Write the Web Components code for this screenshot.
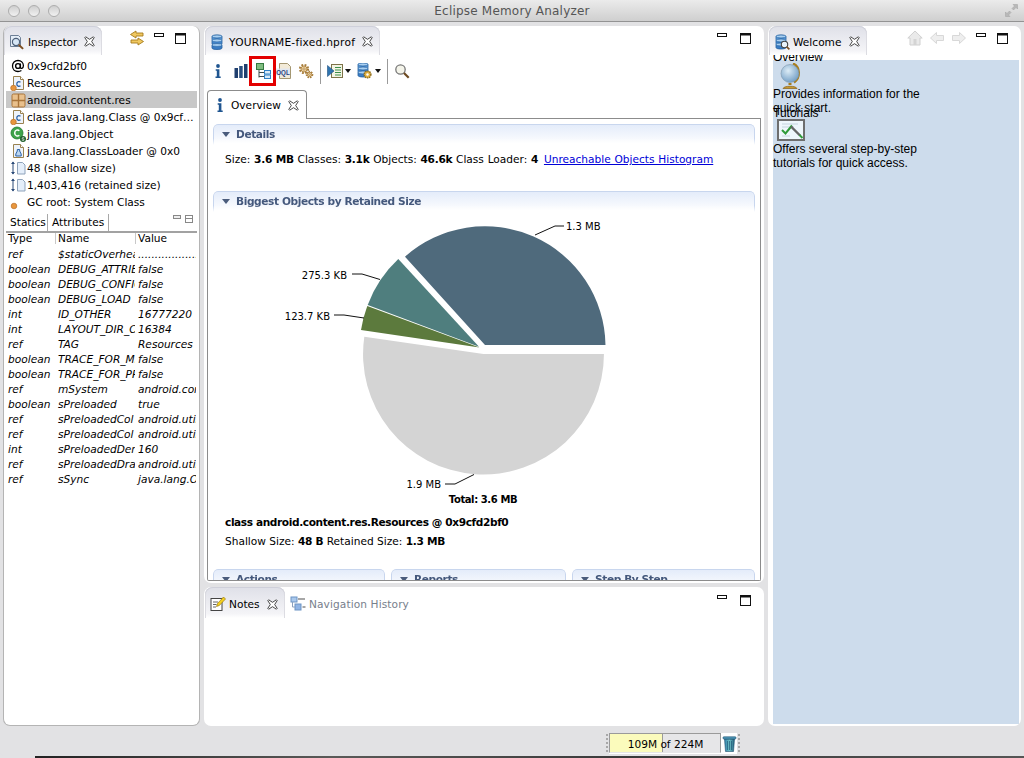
<!DOCTYPE html>
<html>
<head>
<meta charset="utf-8">
<title>Eclipse Memory Analyzer</title>
<style>
  html, body { margin: 0; height: 758px; overflow: hidden; background: #e2e2e4; }
</style>
</head>
<body>
<mat-window>
  <mat-pane slot="left" class="inspector">
    <pane-tab slot="tabs" icon="inspector" label="Inspector" style="width:98px"></pane-tab>
    <span slot="actions" style="display:flex;gap:9px;align-items:flex-start">
      <mat-icon name="swap" style="margin:-3px 0 0 0"></mat-icon>
      <mat-icon name="min"></mat-icon>
      <mat-icon name="max" style="margin-left:1px"></mat-icon>
    </span>
    <inspector-view></inspector-view>
  </mat-pane>

  <mat-pane slot="center" style="flex:none;height:557px">
    <pane-tab slot="tabs" icon="db" label="YOURNAME-fixed.hprof" style="width:175px;--ls:.25px"></pane-tab>
    <span slot="actions" style="display:flex;gap:12px"><mat-icon name="min"></mat-icon><mat-icon name="max"></mat-icon></span>
    <editor-toolbar></editor-toolbar>
    <overview-page></overview-page>
  </mat-pane>

  <mat-pane slot="center" style="flex:1">
    <pane-tab slot="tabs" icon="notes" label="Notes" style="width:80px;height:31px;padding-top:3px"></pane-tab>
    <pane-tab slot="tabs" icon="history" label="Navigation History" plain style="height:31px;padding-top:3px"></pane-tab>
    <span slot="actions" style="display:flex;gap:12px;margin-top:1px"><mat-icon name="min"></mat-icon><mat-icon name="max"></mat-icon></span>
  </mat-pane>

  <mat-pane slot="right">
    <pane-tab slot="tabs" icon="welcome" label="Welcome" style="width:98px"></pane-tab>
    <span slot="actions" style="display:flex;gap:6px">
      <mat-icon name="home" style="margin-top:-3px"></mat-icon>
      <mat-icon name="back" style="margin-top:-3px"></mat-icon>
      <mat-icon name="forward" style="margin-top:-3px"></mat-icon>
      <mat-icon name="min" style="margin-left:3px"></mat-icon>
      <mat-icon name="max" style="margin-left:4px"></mat-icon>
    </span>
    <welcome-view></welcome-view>
  </mat-pane>
</mat-window>

<script>
const UI_FONT = '"DejaVu Sans", "Liberation Sans", sans-serif';

const DOC = '<path d="M3.5 1.5h7l3 3v10h-10z" fill="#eef3fa" stroke="#9a8250"/><path d="M10.5 1.5v3h3" fill="#fff" stroke="#9a8250"/>';
const DOT = '<circle cx="3.5" cy="13" r="2.8" fill="#e8963c" stroke="#b9702a" stroke-width=".7"/>';
const CYL = (y, f) => `<path d="M2 ${y+1.5}c0-2 10-2 10 0v3c0 2-10 2-10 0z" fill="${f}" stroke="#24609e" stroke-width=".8"/><ellipse cx="7" cy="${y+1.5}" rx="5" ry="1.4" fill="#a9d0f2" stroke="#24609e" stroke-width=".6"/>`;

const ICONS = {
  min: [11, 5, '<rect x=".5" y=".5" width="9" height="3" fill="#fff" stroke="#111"/>'],
  max: [11, 11, '<rect x=".5" y=".5" width="10" height="10" fill="#fff" stroke="#111"/><rect x="0" y="0" width="11" height="2.5" fill="#111"/>'],
  minsm: [8, 5, '<rect x=".5" y=".5" width="7" height="3" fill="#eee" stroke="#888"/>'],
  maxsm: [8, 8, '<rect x=".5" y=".5" width="7" height="7" fill="#fff" stroke="#888"/><rect x="0" y="3" width="8" height="1" fill="#888"/>'],
  close: [11, 11, '<path d="M1.6.8 5.5 3.3 9.4.8l.8.8-2.5 3.9 2.5 3.9-.8.8-3.9-2.5-3.9 2.5-.8-.8 2.5-3.9L.8 1.6z" fill="#fff" stroke="#333" stroke-width=".9"/>'],
  inspector: [16, 16, '<path d="M1.5 1.5h8l2 2v9h-10z" fill="#e4edf7" stroke="#6d7f96"/><circle cx="7" cy="8" r="3.6" fill="#d6e6f5" stroke="#4d5f78" stroke-width="1.2"/><path d="M9.7 10.7l4.4 4.2" stroke="#7d4f22" stroke-width="2"/>'],
  swap: [16, 16, '<path d="M7 1 1.5 4.5 7 8V6h7V3H7z" fill="#f0c860" stroke="#a67a1c" stroke-width=".9"/><path d="M9 8l5.5 3.5L9 15v-2H2v-3h7z" fill="#f0c860" stroke="#a67a1c" stroke-width=".9"/>'],
  at: [16, 16, '<circle cx="8" cy="8" r="2.4" fill="none" stroke="#000" stroke-width="1.4"/><path d="M10.4 5.4v3.800c0 1.900 3 1.700 3-1.400C13.400 4.600 11 2.500 8 2.500 4.800 2.500 2.500 4.800 2.500 8s2.300 5.500 5.500 5.500c1.400 0 2.500-.4 3.400-1" fill="none" stroke="#000" stroke-width="1.300"/>'],
  classdoc: [16, 16, DOC + '<path d="M10.500 7.200C9 6 6.800 6.700 6.800 9s2.200 3 3.700 1.800" fill="none" stroke="#2a62a8" stroke-width="1.300"/>' + DOT],
  pkg: [16, 16, '<rect x="2" y="2" width="13" height="13" rx="1.500" fill="#e9c08c" stroke="#a9743a"/><path d="M8.500 2v13M2 8.500h13" stroke="#a9743a" stroke-width="1.400"/>'],
  cobj: [16, 16, '<circle cx="7" cy="7" r="6" fill="#3ea24a" stroke="#1f7a2c" stroke-width=".8"/><path d="M9.300 4.800C8 3.300 4.700 3.800 4.700 7s3.300 3.700 4.600 2.200" fill="none" stroke="#fff" stroke-width="1.500"/><circle cx="13" cy="13" r="3" fill="#1f5f2c"/><path d="M14.200 11.900c-1-.6-2.400-.2-2.200.6.200.7 2.400.4 2.200 1.300-.2.800-1.600.8-2.400.3" fill="none" stroke="#fff" stroke-width=".7"/>'],
  loader: [16, 16, DOC + '<path d="M7.300 6.500h2.400v1.500l1.500 3v2H5.800v-2l1.500-3z" fill="#bcd6f0" stroke="#2a62a8"/>'],
  size: [16, 16, '<path d="M3 2v12" stroke="#2a4a78"/><path d="M1 4 3 1.500 5 4zM1 12l2 2.500L5 12z" fill="#2a4a78"/><path d="M7.500 2.500h5l2.500 2.500v9H7.500z" fill="#e4eefa" stroke="#8fa3bb"/>'],
  gcdot: [16, 16, '<circle cx="4" cy="12" r="2.800" fill="#e8963c" stroke="#b9702a" stroke-width=".7"/>'],
  db: [16, 16, CYL(1, '#5c9bdc') + CYL(5, '#4488cf') + CYL(9.500, '#3a7cc4')],
  info: [16, 16, '<circle cx="8" cy="3" r="1.900" fill="#1f5590"/><path d="M5.700 6.200h3.700v7.200h1.300V15H5.500v-1.600h1.300V7.800H5.700z" fill="#1f5590"/>'],
  bars: [16, 16, '<rect x="1.500" y="5" width="3.500" height="10" fill="#1f3f6e"/><rect x="6.200" y="3" width="3.500" height="12" fill="#2b4f80"/><rect x="11" y="1" width="3.500" height="14" fill="#1f3f6e"/>'],
  domtree: [16, 16, '<path d="M4 7v7.500M4 9.500h5M4 13.500h5" stroke="#3d4a4a" fill="none"/><rect x="1.500" y=".5" width="7" height="6" fill="#7fbc7f" stroke="#347a3f"/><rect x="9.500" y="7.500" width="6" height="3.500" fill="#d8eaf8" stroke="#2f80c4"/><rect x="9.500" y="12" width="6" height="3.500" fill="#d8eaf8" stroke="#2f80c4"/>'],
  oql: [16, 16, '<path d="M3.500 .5h8l3 3v12h-11z" fill="#f2ead8" stroke="#a59772"/><rect x="0" y="5.500" width="14" height="7" fill="#dde6f5" opacity=".8"/><text x=".2" y="11.500" font-family="Liberation Sans" font-weight="700" font-size="7" fill="#2a3f78" textLength="13.500" lengthAdjust="spacingAndGlyphs">OQL</text>'],
  gear: [16, 16, '<g fill="#d8a860" stroke="#a87e3c" stroke-width=".8"><circle cx="6" cy="6" r="3.800" stroke-dasharray="1.700 1.300" stroke-width="2.600" fill="none"/><circle cx="6" cy="6" r="3" fill="#ecd09c"/><circle cx="6" cy="6" r="1.100" fill="#fff"/><circle cx="11.500" cy="11.500" r="2.800" stroke-dasharray="1.400 1" stroke-width="2" fill="none"/><circle cx="11.500" cy="11.500" r="2.300" fill="#ecd09c"/><circle cx="11.500" cy="11.500" r=".8" fill="#fff"/></g>'],
  run: [16, 16, '<rect x="4.500" y="1.500" width="11" height="13" fill="#f4f4e4" stroke="#7d7348"/><path d="M8 4.500h6M8 7h6M8 9.500h6M8 12h6" stroke="#3d8f4a" stroke-width="1.200"/><path d="M.5 2.500 7 8 .5 13.500z" fill="#2f74b0" stroke="#1e4f80" stroke-width=".6"/>'],
  dbgear: [16, 16, CYL(0, '#5c9bdc') + CYL(4, '#4488cf') + CYL(8, '#3a7cc4') + '<circle cx="11.500" cy="11.500" r="3.400" fill="#e0b040" stroke="#8a6a1c" stroke-dasharray="1.400 .8" stroke-width="1.400"/><circle cx="11.500" cy="11.500" r="1.200" fill="#fff"/>'],
  search: [16, 16, '<circle cx="6.500" cy="6.500" r="4.700" fill="#f4f4ea" stroke="#777" stroke-width="1.300"/><path d="M10 10l4.700 4.700" stroke="#6d4a20" stroke-width="2.200"/>'],
  notes: [16, 16, '<rect x="1" y="2.500" width="11" height="12" fill="#fff" stroke="#444"/><path d="M3 6h5M3 8.500h3.500M3 11h3" stroke="#666"/><path d="M6.500 10.500l1-3L13.500 1l2 2-6.200 6.500z" fill="#f4d020" stroke="#9a7a10" stroke-width=".7"/>'],
  history: [16, 16, '<rect x="1" y="1" width="6" height="5" fill="#a9c8ec" stroke="#6d94c4"/><rect x="5" y="8" width="6" height="6" fill="#90b4e4" stroke="#6d94c4"/><path d="M2.500 6v5H5" fill="none" stroke="#8aa0bd"/><path d="M8 3h7M12.500 11h3" stroke="#8a8a8a" stroke-width="1.300"/>'],
  welcome: [16, 16, CYL(1, '#5c9bdc') + CYL(5, '#4488cf') + CYL(9, '#3a7cc4') + '<circle cx="10.500" cy="10.500" r="3.200" fill="#e8f2fa" stroke="#444" stroke-width="1.100"/><path d="M12.800 12.800l2.600 2.600" stroke="#7d4f22" stroke-width="1.700"/>'],
  home: [16, 16, '<path d="M8 1 .8 8H3v7h10V8h2.200z" fill="#eaeaea" stroke="#d0d0d0"/><rect x="6.500" y="9" width="3" height="6" fill="#d4d4d4"/>'],
  back: [16, 16, '<path d="M7.500 2.500 1.500 8l6 5.500V10.500h7v-5h-7z" fill="#eeeeee" stroke="#d8d8d8"/>'],
  forward: [16, 16, '<path d="M8.500 2.500l6 5.500-6 5.500V10.500h-7v-5h7z" fill="#eeeeee" stroke="#d8d8d8"/>'],
  globe: [22, 26, '<defs><radialGradient id="g" cx=".4" cy=".35" r=".7"><stop offset="0" stop-color="#dcecf6"/><stop offset="1" stop-color="#6f9cc4"/></radialGradient></defs><path d="M13 .5c7 3 8 14 1 19" fill="none" stroke="#a87e1e" stroke-width="2.400"/><circle cx="10" cy="10.500" r="9" fill="url(#g)" stroke="#7a94a8" stroke-width=".6"/><path d="M10 20v2" stroke="#a87e1e" stroke-width="3"/><path d="M3 25.500c1-3 13-3 14 0z" fill="#c89a30" stroke="#86601a" stroke-width=".7"/>'],
  tutorial: [28, 22, '<rect x="1" y="1" width="26" height="20" fill="#eef6fb" stroke="#6e6e6e" stroke-width="2"/><path d="M5 5h16M5 8h12M5 17h8" stroke="#c4d4de"/><path d="M5 11l3.500 3.500L15 6.500" fill="none" stroke="#2f9a38" stroke-width="2"/><path d="M14 7.500l9 9" stroke="#666" stroke-width="2.400"/><path d="M22.500 16l3 3" stroke="#2f9a38" stroke-width="2"/>'],
  trash: [15, 17, '<defs><linearGradient id="t" x1="0" x2="1"><stop offset="0" stop-color="#2f7fa8"/><stop offset=".5" stop-color="#6fc0c4"/><stop offset="1" stop-color="#1f5f7c"/></linearGradient></defs><path d="M2.500 4h10l-1 12.500h-8z" fill="url(#t)" stroke="#1f5070" stroke-width=".6"/><rect x="1" y="1.800" width="13" height="2.200" rx=".8" fill="#4e98b8" stroke="#1f5070" stroke-width=".6"/><path d="M5.500 6v9M7.500 6v9M9.500 6v9" stroke="#1f5a78" stroke-width=".7"/>'],
  zoom: [13, 13, '<path d="M8 .5h4.500V5L11 3.500 8.500 6 7 4.500 9.500 2zM5 12.500H.5V8L2 9.500 4.500 7 6 8.500 3.500 11z" fill="#b8b8b8" stroke="#a0a0a0" stroke-width=".5"/>']
};

class MatIcon extends HTMLElement {
  connectedCallback() {
    const [w, h, body] = ICONS[this.getAttribute('name')];
    this.attachShadow({ mode: 'open' }).innerHTML = `
      <style>
        :host { display: inline-flex; flex: none; width: ${w}px; height: ${h}px; }
        svg { display: block; }
      </style>
      <svg width="${w}" height="${h}" viewBox="0 0 ${w} ${h}">${body}</svg>`;
  }
}

class MatWindow extends HTMLElement {
  constructor() {
    super();
    this.attachShadow({ mode: 'open' }).innerHTML = `
      <style>
        :host { display: block; font-family: ${UI_FONT}; font-size: 10.6px; color: #000; }
        .win { display: flex; flex-direction: column; height: 756px; background: #e2e2e4; border-radius: 0 0 5px 5px; }
        .title {
          flex: none; height: 21px; display: flex; align-items: center;
          background: linear-gradient(#ebebeb, #cfcfcf); border-bottom: 1px solid #939393;
        }
        .lights { display: flex; gap: 8px; padding-left: 8px; }
        .lights i {
          width: 10px; height: 10px; border-radius: 50%; border: 1px solid #adadad;
          background: linear-gradient(#cfcfcf, #f2f2f2);
        }
        .name { flex: 1; text-align: center; color: #555; font-size: 12px; letter-spacing: .2px; margin-right: 41px; }
        .zoom { margin-right: 6px; }
        .work {
          flex: 1; min-height: 0; display: grid; grid-template-columns: 197px 560px 253px; gap: 4px;
          padding: 4px 3px 0 3px;
        }
        .col { display: flex; flex-direction: column; gap: 4px; min-height: 0; }
        .status {
          flex: none; height: 30px; display: flex; align-items: flex-start;
          padding: 7px 0 0 606px; box-sizing: border-box;
        }
        .dots { width: 2px; height: 18px; margin-top: 1px; background: repeating-linear-gradient(#a8a8a8 0 2px, transparent 2px 4px); }
        .heap { display: flex; width: 128px; height: 21px; background: #fff; margin: 0 1px; }
        .meter {
          width: 112px; box-sizing: border-box; height: 20px; text-align: center; line-height: 20px;
          background: linear-gradient(90deg, #fbfbbc 0 52px, #9a9a9a 52px 53px, #e6e6e8 53px);
          border: 1px solid #9a9a9a; border-bottom-color: #e6e6e8; padding-left: 1px;
        }
        .heap mat-icon { margin: 2px 0 0 1px; }
        .strip { height: 2px; margin-left: 35px; background: linear-gradient(90deg, #222, #5a5a58 30%, #3a3a3a 60%, #555); }
      </style>
      <div class="win">
        <div class="title">
          <div class="lights"><i></i><i></i><i></i></div>
          <div class="name">Eclipse Memory Analyzer</div>
          <mat-icon class="zoom" name="zoom"></mat-icon>
        </div>
        <div class="work">
          <div class="col"><slot name="left"></slot></div>
          <div class="col"><slot name="center"></slot></div>
          <div class="col"><slot name="right"></slot></div>
        </div>
        <div class="status">
          <div class="dots"></div>
          <div class="heap"><div class="meter">109M of 224M</div><mat-icon name="trash"></mat-icon></div>
          <div class="dots"></div>
        </div>
      </div>
      <div class="strip"></div>`;
  }
}

class MatPane extends HTMLElement {
  constructor() {
    super();
    this.attachShadow({ mode: 'open' }).innerHTML = `
      <style>
        :host {
          display: flex; flex-direction: column; flex: 1; min-height: 0; box-sizing: border-box; overflow: hidden;
          background: #fff; border-radius: 7px;
        }
        :host(.inspector) { border: 1px solid #b4b4b4; border-top: 0; }
        .head { flex: none; height: 29px; display: flex; align-items: flex-start; padding-left: 1px; }
        :host(.inspector) .head { padding-left: 0; }
        .actions { margin-left: auto; padding: 7px 13px 0 0; display: flex; }
        .body { flex: 1; min-height: 0; display: flex; flex-direction: column; }
      </style>
      <div class="head"><slot name="tabs"></slot><div class="actions"><slot name="actions"></slot></div></div>
      <div class="body"><slot></slot></div>`;
  }
}

class PaneTab extends HTMLElement {
  connectedCallback() {
    const plain = this.hasAttribute('plain');
    this.attachShadow({ mode: 'open' }).innerHTML = `
      <style>
        :host {
          display: flex; align-items: center; box-sizing: border-box; height: 29px; padding: 2px 7px 0 5px; flex: none;
          border-radius: 8px 8px 0 0;
          ${plain ? 'color: #77808c;' : 'background: linear-gradient(#dfe0e8, #f4f4f7 85%, #fff); box-shadow: inset 0 1px 0 #cfd0da, inset 1px 0 0 #dcdce2, inset -1px 0 0 #dcdce2;'}
        }
        span { margin-left: 3px; white-space: nowrap; flex: 1; letter-spacing: var(--ls, 0); ${plain ? 'letter-spacing: .1px;' : ''} }
      </style>
      <mat-icon name="${this.getAttribute('icon')}"></mat-icon>
      <span>${this.getAttribute('label')}</span>
      ${plain ? '' : '<mat-icon name="close"></mat-icon>'}`;
  }
}

class TreeRow extends HTMLElement {
  connectedCallback() {
    this.attachShadow({ mode: 'open' }).innerHTML = `
      <style>
        :host { display: flex; align-items: center; height: 17px; padding-left: 4px; margin: 0 2px; white-space: nowrap; overflow: hidden; }
        :host([selected]) { background: #c8c8c8; }
        span { margin-left: 1px; }
      </style>
      <mat-icon name="${this.getAttribute('icon')}"></mat-icon><span><slot></slot></span>`;
  }
}

const STATICS = [
  ['ref', '$staticOverhead', '.........................'],
  ['boolean', 'DEBUG_ATTRIB', 'false'],
  ['boolean', 'DEBUG_CONFIG', 'false'],
  ['boolean', 'DEBUG_LOAD', 'false'],
  ['int', 'ID_OTHER', '16777220'],
  ['int', 'LAYOUT_DIR_O', '16384'],
  ['ref', 'TAG', 'Resources'],
  ['boolean', 'TRACE_FOR_MI', 'false'],
  ['boolean', 'TRACE_FOR_PR', 'false'],
  ['ref', 'mSystem', 'android.content'],
  ['boolean', 'sPreloaded', 'true'],
  ['ref', 'sPreloadedCol', 'android.util'],
  ['ref', 'sPreloadedCol', 'android.util'],
  ['int', 'sPreloadedDen', '160'],
  ['ref', 'sPreloadedDra', 'android.util'],
  ['ref', 'sSync', 'java.lang.Object']
];

class InspectorView extends HTMLElement {
  constructor() {
    super();
    const rows = STATICS.map(r => `<div class="row">${r.map(c => `<div>${c}</div>`).join('')}</div>`).join('');
    this.attachShadow({ mode: 'open' }).innerHTML = `
      <style>
        :host { display: flex; flex-direction: column; flex: 1; min-height: 0; padding-top: 2px; }
        .tabs { display: flex; height: 17px; margin: 4px 2px 0; border-bottom: 2px solid #a2a2a2; }
        .tabs div { padding: 0 4px; line-height: 17px; border-right: 1px solid #a8a8a8; }
        .tabs div:first-child { width: 33px; }
        .tabs div:nth-child(2) { width: 52px; }
        .mini { margin-left: auto; display: flex; gap: 4px; padding: 0 4px 0 0; align-items: flex-start; margin-top: 1px; }
        .row, .hdr { display: grid; grid-template-columns: 50px 80px 60px; margin: 0 2px; white-space: nowrap; }
        .hdr { height: 14px; }
        .hdr div { padding-left: 2px; border-right: 1px solid #c8c8c8; height: 11px; line-height: 11px; }
        .hdr div:last-child { border: 0; }
        .row { height: 15px; line-height: 15px; font-style: italic; }
        .row div { overflow: hidden; padding-left: 2px; }
        .row div:nth-child(2) { margin-right: 1px; }
      </style>
      <tree-row icon="at">0x9cfd2bf0</tree-row>
      <tree-row icon="classdoc">Resources</tree-row>
      <tree-row icon="pkg" selected>android.content.res</tree-row>
      <tree-row icon="classdoc">class java.lang.Class @ 0x9cf…</tree-row>
      <tree-row icon="cobj">java.lang.Object</tree-row>
      <tree-row icon="loader">java.lang.ClassLoader @ 0x0</tree-row>
      <tree-row icon="size">48 (shallow size)</tree-row>
      <tree-row icon="size">1,403,416 (retained size)</tree-row>
      <tree-row icon="gcdot">GC root: System Class</tree-row>
      <div class="tabs">
        <div>Statics</div><div>Attributes</div>
        <span class="mini"><mat-icon name="minsm"></mat-icon><mat-icon name="maxsm"></mat-icon></span>
      </div>
      <div class="hdr"><div>Type</div><div>Name</div><div>Value</div></div>
      ${rows}`;
  }
}

class EditorToolbar extends HTMLElement {
  constructor() {
    super();
    this.attachShadow({ mode: 'open' }).innerHTML = `
      <style>
        :host { display: flex; flex: none; align-items: center; height: 32px; padding: 0 0 2px 6px; }
        .sep { width: 1px; height: 25px; background: #9a9a9a; margin-left: 6px; }
        .red { box-sizing: border-box; width: 27px; height: 30px; border: 3px solid #e30000; display: flex; align-items: center; justify-content: center; }
        .arrow { width: 0; height: 0; border: 3px solid transparent; border-top: 4px solid #111; border-bottom: 0; }
      </style>
      <mat-icon name="info"></mat-icon>
      <mat-icon name="bars" style="margin-left:7px"></mat-icon>
      <div class="red"><mat-icon name="domtree"></mat-icon></div>
      <mat-icon name="oql"></mat-icon>
      <mat-icon name="gear" style="margin-left:6px"></mat-icon>
      <div class="sep"></div>
      <mat-icon name="run" style="margin-left:6px"></mat-icon>
      <i class="arrow" style="margin-left:2px"></i>
      <mat-icon name="dbgear" style="margin-left:5px"></mat-icon>
      <i class="arrow" style="margin-left:3px"></i>
      <div class="sep"></div>
      <mat-icon name="search" style="margin-left:6px"></mat-icon>`;
  }
}

class FormSection extends HTMLElement {
  connectedCallback() {
    this.attachShadow({ mode: 'open' }).innerHTML = `
      <style>
        :host { display: block; min-width: 0; }
        .head {
          height: 21px; box-sizing: border-box; padding: 0 0 2px 8px; display: flex; align-items: center; gap: 6px;
          border: 1px solid #c8d6ee; border-bottom: 0; border-radius: 5px 5px 0 0;
          background: linear-gradient(#e4ecfa, #fff); color: #44587c; font-weight: 700; letter-spacing: -.4px; white-space: nowrap;
          -webkit-mask-image: linear-gradient(#000 70%, transparent);
        }
        i { width: 0; height: 0; border: 4px solid transparent; border-top: 5px solid #4a5c7c; border-bottom: 0; flex: none; }
      </style>
      <div class="head"><i></i>${this.getAttribute('title')}</div>
      <slot></slot>`;
  }
}

class PieChart extends HTMLElement {
  constructor() {
    super();
    const label = (x, y, t, a = 'start', w = 400) => `<text x="${x}" y="${y}" text-anchor="${a}" font-weight="${w}">${t}</text>`;
    this.attachShadow({ mode: 'open' }).innerHTML = `
      <style>
        :host { display: block; height: 298px; }
        svg { display: block; font-family: ${UI_FONT}; font-size: 10px; fill: #000; }
        .lead { fill: none; stroke: #111; stroke-width: 1; }
        text[font-weight="700"] { letter-spacing: -.4px; }
      </style>
      <svg width="542" height="298" viewBox="213 212 542 298">
        <path d="M485 345H605.500A120.500 120.500 0 0 0 405 256.700Z" fill="#4f6a7c"/>
        <path d="M479 346.700 398.300 259A119 119 0 0 0 367.700 305Z" fill="#4f7e7e"/>
        <path d="M479.500 347.500 367.300 306A119 119 0 0 0 361 330Z" fill="#5c7a3d"/>
        <path d="M483.500 354H603.950A120.450 120.450 0 1 1 364.300 336.700Z" fill="#d4d4d4"/>
        <path class="lead" d="M535 235 555 226H564"/>
        <path class="lead" d="M352 274H362L380 279.500"/>
        <path class="lead" d="M334 315H344L364 318"/>
        <path class="lead" d="M445 484H455L474 474.500"/>
        ${label(566, 230, '1.3 MB')}
        ${label(347, 279, '275.3 KB', 'end')}
        ${label(330, 320, '123.7 KB', 'end')}
        ${label(441, 488, '1.9 MB', 'end')}
        ${label(483, 503, 'Total: 3.6 MB', 'middle', 700)}
      </svg>`;
  }
}

class OverviewPage extends HTMLElement {
  constructor() {
    super();
    this.attachShadow({ mode: 'open' }).innerHTML = `
      <style>
        :host { display: flex; flex-direction: column; height: 491px; margin: 1px 3px 0; flex: none; }
        .tabrow { flex: none; height: 29px; display: flex; }
        .tab {
          width: 100px; box-sizing: border-box; display: flex; align-items: center; padding: 0 7px 0 4px; gap: 3px;
          border: 1px solid #8c8c8c; border-bottom: 0; border-radius: 4px 4px 0 0;
        }
        .tab span { flex: 1; }
        .rest { flex: 1; border-bottom: 1px solid #8c8c8c; }
        .page {
          flex: 1; min-height: 0; overflow: hidden; padding: 5px 5px 0; background: #fff;
          border: 1px solid #8c8c8c; border-top: 0; border-radius: 0 0 2px 2px;
        }
        .details { height: 67px; }
        .line { padding-left: 12px; line-height: 14px; white-space: nowrap; }
        .details .line { padding-top: 7px; word-spacing: .4px; }
        b { letter-spacing: -.3px; }
        a { color: #0000d8; text-decoration: underline; margin-left: 2px; }
        h4 { font-size: inherit; letter-spacing: -.4px; margin: 5px 0 0 12px; line-height: 14px; }
        .sub { margin-top: 5px; }
        .cards { display: grid; grid-template-columns: 172px 175px 183px; gap: 6px; margin-top: 21px; }
      </style>
      <div class="tabrow">
        <div class="tab"><mat-icon name="info"></mat-icon><span>Overview</span><mat-icon name="close"></mat-icon></div>
        <div class="rest"></div>
      </div>
      <div class="page">
        <form-section class="details" title="Details">
          <div class="line">Size: <b>3.6 MB</b> Classes: <b>3.1k</b> Objects: <b>46.6k</b> Class Loader: <b>4</b> <a>Unreachable Objects Histogram</a></div>
        </form-section>
        <form-section title="Biggest Objects by Retained Size"><pie-chart></pie-chart></form-section>
        <h4>class android.content.res.Resources @ 0x9cfd2bf0</h4>
        <div class="line sub">Shallow Size: <b>48 B</b> Retained Size: <b>1.3 MB</b></div>
        <div class="cards">
          <form-section title="Actions"></form-section>
          <form-section title="Reports"></form-section>
          <form-section title="Step By Step"></form-section>
        </div>
      </div>`;
  }
}

class WelcomeView extends HTMLElement {
  constructor() {
    super();
    this.attachShadow({ mode: 'open' }).innerHTML = `
      <style>
        :host { display: block; flex: 1; min-height: 0; overflow: hidden; }
        .sheet {
          display: flow-root; margin: 5px 2px 2px 5px; height: 664px; background: #cddcec;
          font: 12px/14px "Liberation Sans", sans-serif; color: #000;
        }
        .sheet > div { width: 152px; }
        .first { margin-top: -10px; }
        mat-icon { display: flex; }
      </style>
      <div class="sheet">
        <div class="first">Overview</div>
        <mat-icon name="globe" style="margin:-1px 0 0 7px"></mat-icon>
        <div style="margin-top:-2px">Provides information for the quick start.</div>
        <div style="margin-top:-9px">Tutorials</div>
        <mat-icon name="tutorial" style="margin:-1px 0 0 4px"></mat-icon>
        <div style="margin-top:1px">Offers several step-by-step tutorials for quick access.</div>
      </div>`;
  }
}

customElements.define('mat-icon', MatIcon);
customElements.define('mat-window', MatWindow);
customElements.define('mat-pane', MatPane);
customElements.define('pane-tab', PaneTab);
customElements.define('tree-row', TreeRow);
customElements.define('inspector-view', InspectorView);
customElements.define('editor-toolbar', EditorToolbar);
customElements.define('form-section', FormSection);
customElements.define('pie-chart', PieChart);
customElements.define('overview-page', OverviewPage);
customElements.define('welcome-view', WelcomeView);
</script>
</body>
</html>
